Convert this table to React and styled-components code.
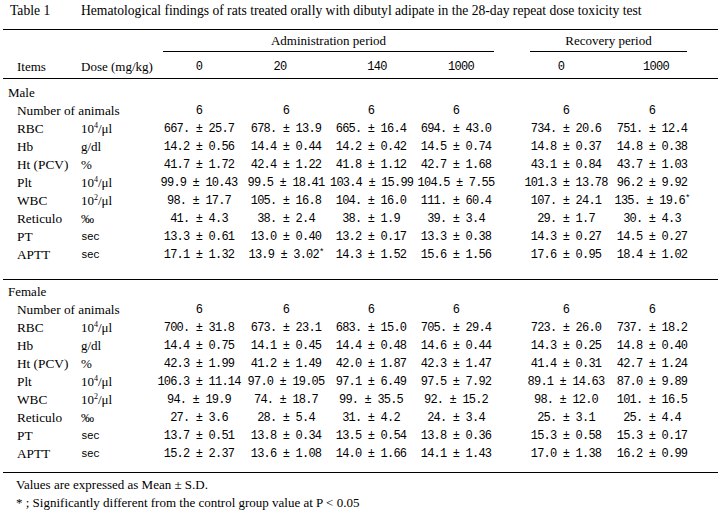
import React from 'react';
import styled, { createGlobalStyle } from 'styled-components';

const serif = `'Liberation Serif', 'Times New Roman', serif`;
const mono = `'Liberation Mono', 'DejaVu Sans Mono', monospace`;

// label | unit | 0 | 20 | 140 | 1000 | gap | rec 0 | rec 1000 | rest
const columns = '78px 75px 86px 88px 82px 88px 22px 88px 84px 1fr';

const male = [
  ['RBC', 'e4', ['667. ± 25.7', '678. ± 13.9', '665. ± 16.4', '694. ± 43.0', '734. ± 20.6', '751. ± 12.4']],
  ['Hb', 'g/dl', ['14.2 ± 0.56', '14.4 ± 0.44', '14.2 ± 0.42', '14.5 ± 0.74', '14.8 ± 0.37', '14.8 ± 0.38']],
  ['Ht (PCV)', '%', ['41.7 ± 1.72', '42.4 ± 1.22', '41.8 ± 1.12', '42.7 ± 1.68', '43.1 ± 0.84', '43.7 ± 1.03']],
  ['Plt', 'e4', ['99.9 ± 10.43', '99.5 ± 18.41', '103.4 ± 15.99', '104.5 ± 7.55', '101.3 ± 13.78', '96.2 ± 9.92']],
  ['WBC', 'e2', ['98. ± 17.7', '105. ± 16.8', '104. ± 16.0', '111. ± 60.4', '107. ± 24.1', '135. ± 19.6*']],
  ['Reticulo', '‰', ['41. ± 4.3', '38. ± 2.4', '38. ± 1.9', '39. ± 3.4', '29. ± 1.7', '30. ± 4.3']],
  ['PT', 'sec', ['13.3 ± 0.61', '13.0 ± 0.40', '13.2 ± 0.17', '13.3 ± 0.38', '14.3 ± 0.27', '14.5 ± 0.27']],
  ['APTT', 'sec', ['17.1 ± 1.32', '13.9 ± 3.02*', '14.3 ± 1.52', '15.6 ± 1.56', '17.6 ± 0.95', '18.4 ± 1.02']],
];

const female = [
  ['RBC', 'e4', ['700. ± 31.8', '673. ± 23.1', '683. ± 15.0', '705. ± 29.4', '723. ± 26.0', '737. ± 18.2']],
  ['Hb', 'g/dl', ['14.4 ± 0.75', '14.1 ± 0.45', '14.4 ± 0.48', '14.6 ± 0.44', '14.3 ± 0.25', '14.8 ± 0.40']],
  ['Ht (PCV)', '%', ['42.3 ± 1.99', '41.2 ± 1.49', '42.0 ± 1.87', '42.3 ± 1.47', '41.4 ± 0.31', '42.7 ± 1.24']],
  ['Plt', 'e4', ['106.3 ± 11.14', '97.0 ± 19.05', '97.1 ± 6.49', '97.5 ± 7.92', '89.1 ± 14.63', '87.0 ± 9.89']],
  ['WBC', 'e2', ['94. ± 19.9', '74. ± 18.7', '99. ± 35.5', '92. ± 15.2', '98. ± 12.0', '101. ± 16.5']],
  ['Reticulo', '‰', ['27. ± 3.6', '28. ± 5.4', '31. ± 4.2', '24. ± 3.4', '25. ± 3.1', '25. ± 4.4']],
  ['PT', 'sec', ['13.7 ± 0.51', '13.8 ± 0.34', '13.5 ± 0.54', '13.8 ± 0.36', '15.3 ± 0.58', '15.3 ± 0.17']],
  ['APTT', 'sec', ['15.2 ± 2.37', '13.6 ± 1.08', '14.0 ± 1.66', '14.1 ± 1.43', '17.0 ± 1.38', '16.2 ± 0.99']],
];

const doses = [
  { label: '0', col: 3, shift: 0 },
  { label: '20', col: 4, shift: -6 },
  { label: '140', col: 5, shift: 6 },
  { label: '1000', col: 6, shift: 5 },
  { label: '0', col: 8, shift: -5 },
  { label: '1000', col: 9, shift: 4 },
];

function Unit({ unit }) {
  if (unit === 'e4' || unit === 'e2') {
    return (
      <UnitCell>
        10<Sup>{unit === 'e4' ? '4' : '2'}</Sup>/μl
      </UnitCell>
    );
  }
  return <UnitCell sans={unit === 'sec'}>{unit}</UnitCell>;
}

function Value({ text, col }) {
  const star = text.endsWith('*');
  return (
    <ValueCell col={col}>
      {star ? text.slice(0, -1) : text}
      {star && <Star>*</Star>}
    </ValueCell>
  );
}

const valueCols = [3, 4, 5, 6, 8, 9];

function Section({ title, rows }) {
  return (
    <SectionBody>
      <Row>
        <SexLabel>{title}</SexLabel>
      </Row>
      <Row>
        <ItemLabel wide>Number of animals</ItemLabel>
        {valueCols.map((c) => (
          <Value key={c} col={c} text="6" />
        ))}
      </Row>
      {rows.map(([name, unit, vals]) => (
        <Row key={name}>
          <ItemLabel>{name}</ItemLabel>
          <Unit unit={unit} />
          {vals.map((v, i) => (
            <Value key={i} col={valueCols[i]} text={v} />
          ))}
        </Row>
      ))}
    </SectionBody>
  );
}

export default function App() {
  return (
    <Page>
      <GlobalStyle />
      <TitleBar>
        <TableNo>Table 1</TableNo>
        <Caption>
          Hematological findings of rats treated orally with dibutyl adipate in the 28-day repeat dose toxicity test
        </Caption>
      </TitleBar>
      <Table>
        <GroupRow>
          <GroupHead from={3} to={7} inset="7px 6px">
            Administration period
          </GroupHead>
          <GroupHead from={8} to={10} inset="8px 7px">
            Recovery period
          </GroupHead>
        </GroupRow>
        <HeadRow>
          <HeadLabel>Items</HeadLabel>
          <HeadLabel>Dose (mg/kg)</HeadLabel>
          {doses.map((d) => (
            <DoseHead key={d.col} col={d.col} shift={d.shift}>
              {d.label}
            </DoseHead>
          ))}
        </HeadRow>
        <Section title="Male" rows={male} />
        <Section title="Female" rows={female} />
      </Table>
      <Notes>
        <Note>Values are expressed as Mean ± S.D.</Note>
        <Note>* ; Significantly different from the control group value at P &lt; 0.05</Note>
      </Notes>
    </Page>
  );
}

const GlobalStyle = createGlobalStyle`
  body {
    margin: 0;
    background: #fff;
    color: #000;
    font-family: ${serif};
  }
`;

const Page = styled.div`
  width: 722px;
  height: 513px;
  padding: 0 4px 0 3px;
  box-sizing: border-box;
  overflow: hidden;
`;

const TitleBar = styled.div`
  display: flex;
  align-items: center;
  height: 22px;
  font-size: 13.6px;
`;

const TableNo = styled.div`
  width: 78px;
  padding-left: 7px;
  box-sizing: border-box;
`;

const Caption = styled.div`
  white-space: nowrap;
`;

const Table = styled.div`
  margin-top: 7px;
  border-top: 1px solid #000;
  border-bottom: 1px solid #000;
`;

const Row = styled.div`
  display: grid;
  grid-template-columns: ${columns};
  height: 18px;
  align-items: center;
  white-space: nowrap;
`;

const GroupRow = styled(Row)`
  height: 21px;
  align-items: stretch;
`;

const GroupHead = styled.div`
  grid-column: ${(p) => p.from} / ${(p) => p.to};
  margin: 0 ${(p) => p.inset.split(' ')[1]} 0 ${(p) => p.inset.split(' ')[0]};
  border-bottom: 1px solid #000;
  text-align: center;
  font-size: 13px;
  line-height: 21px;
`;

const HeadRow = styled(Row)`
  height: 28px;
  align-items: end;
  padding-bottom: 2px;
  box-sizing: border-box;
  border-bottom: 1px solid #000;
`;

const HeadLabel = styled.div`
  font-size: 13px;
  line-height: 18px;
  &:first-child {
    padding-left: 14px;
  }
`;

const DoseHead = styled.div`
  grid-column: ${(p) => p.col};
  text-align: center;
  font-family: ${mono};
  font-size: 12px;
  letter-spacing: -0.7px;
  line-height: 18px;
  transform: translateX(${(p) => p.shift}px);
`;

const SectionBody = styled.div`
  padding: 5px 0 15px;
  & + & {
    border-top: 1px solid #000;
    padding: 3px 0 9px;
  }
`;

const SexLabel = styled.div`
  grid-column: 1 / 3;
  padding-left: 5px;
  font-size: 13px;
`;

const ItemLabel = styled.div`
  grid-column: ${(p) => (p.wide ? '1 / 3' : '1')};
  padding-left: 14px;
  font-size: 13.3px;
`;

const UnitCell = styled.div`
  grid-column: 2;
  font-family: ${(p) => (p.sans ? mono : serif)};
  font-size: ${(p) => (p.sans ? '11px' : '13px')};
  letter-spacing: ${(p) => (p.sans ? '-0.5px' : '0')};
`;

const Sup = styled.sup`
  font-size: 8px;
  line-height: 0;
  vertical-align: 5px;
`;

const ValueCell = styled.div`
  grid-column: ${(p) => p.col};
  text-align: center;
  font-family: ${mono};
  font-size: 12px;
  letter-spacing: -0.8px;
`;

const Star = styled.span`
  font-size: 9px;
  vertical-align: 3px;
`;

const Notes = styled.div`
  padding: 3px 0 0 13px;
`;

const Note = styled.div`
  font-size: 13px;
  line-height: 18px;
  white-space: nowrap;
`;
